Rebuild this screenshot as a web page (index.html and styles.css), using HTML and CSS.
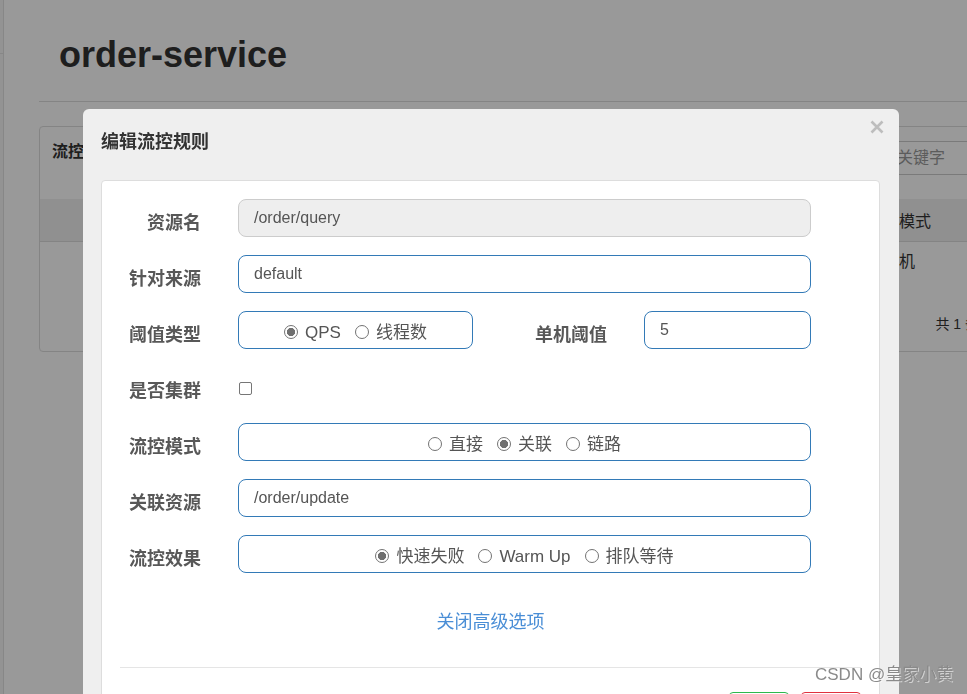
FILE: index.html
```html
<!DOCTYPE html>
<html lang="zh-CN">
<head>
<meta charset="utf-8">
<title>order-service</title>
<link rel="stylesheet" href="styles.css">
</head>
<body>
<div class="layout">
  <aside class="side"><div class="side-top"></div></aside>
  <main class="main">
    <div class="title-bar"><h1 class="app-title">order-service</h1></div>
    <section class="panel">
      <div class="panel-head">
        <span class="panel-title">流控规则</span>
        <div class="search"><span class="ph">请输入关键字</span></div>
      </div>
      <div class="trow thead"><span></span><span class="tc">阈值模式</span><span class="tc">操作</span></div>
      <div class="trow tbody-row"><span></span><span class="tc">单机</span><span class="tc"></span></div>
      <div class="pager">共 1 条记录</div>
    </section>
  </main>
</div>

<div class="overlay"></div>

<div class="modal">
  <div class="modal-head">
    <span class="modal-title">编辑流控规则</span>
    <svg class="close" width="14" height="14" viewBox="0 0 14 14"><path d="M1.5 1.5 L12.5 12.5 M12.5 1.5 L1.5 12.5" stroke="#bdbdbd" stroke-width="2.6" stroke-linecap="butt"/></svg>
  </div>
  <div class="card">
    <div class="form-row">
      <label class="lbl">资源名</label>
      <div class="ctl input disabled">/order/query</div>
    </div>
    <div class="form-row">
      <label class="lbl">针对来源</label>
      <div class="ctl input">default</div>
    </div>
    <div class="form-row">
      <label class="lbl">阈值类型</label>
      <div class="ctl radio-box narrow">
        <span class="radio checked"></span><span class="rtext">QPS</span>
        <span class="radio"></span><span class="rtext">线程数</span>
      </div>
      <label class="lbl lbl2">单机阈值</label>
      <div class="input">5</div>
    </div>
    <div class="form-row">
      <label class="lbl">是否集群</label>
      <div class="ctl"><span class="checkbox"></span></div>
    </div>
    <div class="form-row">
      <label class="lbl">流控模式</label>
      <div class="ctl radio-box">
        <span class="radio"></span><span class="rtext">直接</span>
        <span class="radio checked"></span><span class="rtext">关联</span>
        <span class="radio"></span><span class="rtext">链路</span>
      </div>
    </div>
    <div class="form-row">
      <label class="lbl">关联资源</label>
      <div class="ctl input">/order/update</div>
    </div>
    <div class="form-row">
      <label class="lbl">流控效果</label>
      <div class="ctl radio-box">
        <span class="radio checked"></span><span class="rtext">快速失败</span>
        <span class="radio"></span><span class="rtext">Warm Up</span>
        <span class="radio"></span><span class="rtext">排队等待</span>
      </div>
    </div>
    <div class="adv-link"><a class="link">关闭高级选项</a></div>
    <div class="card-footer">
      <button class="btn btn-ok">保存</button>
      <button class="btn btn-cancel">取消</button>
    </div>
  </div>
</div>

<div class="watermark">CSDN @皇家小黄</div>
</body>
</html>
```

FILE: styles.css
```css
* { box-sizing: border-box; }

html, body {
  margin: 0;
  padding: 0;
  width: 100%;
  height: 100%;
  overflow: hidden;
}

body {
  font-family: "Liberation Sans", "Noto Sans CJK SC", sans-serif;
  background: #ffffff;
  color: #333;
  position: relative;
}

/* ---------- background page ---------- */
.layout {
  display: flex;
  min-height: 100%;
}

.side {
  width: 4px;
  flex: none;
  background: #f6f6f6;
  border-right: 1px solid #e2e2e2;
}

.side-top {
  height: 54px;
  border-bottom: 1px solid #e2e2e2;
}

.main {
  flex: 1;
  min-width: 0;
  padding-left: 35px;
}

.title-bar {
  border-bottom: 1px solid #dddddd;
  padding: 35px 0 26px 20px;
}

.app-title {
  margin: 0;
  font-size: 36px;
  line-height: 40px;
  font-weight: bold;
  color: #333;
}

.panel {
  margin-top: 24px;
  margin-right: -108px;
  border: 1px solid #dddddd;
  border-radius: 4px;
}

.panel-head {
  display: flex;
  justify-content: space-between;
  align-items: flex-start;
  padding: 14px 38px 24px 12px;
}

.panel-title {
  font-size: 16px;
  line-height: 22px;
  font-weight: bold;
  color: #333;
}

.search {
  width: 200px;
  height: 34px;
  border: 1px solid #cccccc;
  border-radius: 4px;
  padding-left: 12px;
  font-size: 16px;
  line-height: 32px;
  color: #999;
}

.trow {
  display: grid;
  grid-template-columns: 1fr 110px 120px;
  height: 40px;
  align-items: center;
  font-size: 16px;
  color: #333;
}

.thead {
  height: 43px;
  background: #f0f0f0;
  border-bottom: 1px solid #dddddd;
}

.tbody-row {
  height: 36px;
}

.tc { text-align: center; }

.pager {
  display: flex;
  justify-content: flex-end;
  padding: 36px 67px 17px 0;
  font-size: 14px;
  line-height: 20px;
  color: #333;
}

/* ---------- overlay ---------- */
.overlay {
  position: fixed;
  inset: 0;
  background: rgba(0, 0, 0, 0.4);
  z-index: 10;
}

/* ---------- modal ---------- */
.modal {
  position: absolute;
  left: 83px;
  top: 109px;
  width: 816px;
  height: 640px;
  background: #efefef;
  border-radius: 6px;
  padding: 20px 19px 0 18px;
  z-index: 20;
}

.modal-head {
  display: flex;
  align-items: center;
  margin-bottom: 26px;
  padding-top: 1px;
}

.modal-title {
  font-size: 18px;
  line-height: 24px;
  font-weight: bold;
  color: #333;
}

.close {
  position: absolute;
  right: 15px;
  top: 11px;
}

.card {
  background: #fff;
  border: 1px solid #dddddd;
  border-radius: 4px;
  padding: 18px 68px 0 0;
  height: 100%;
}

.form-row {
  display: flex;
  align-items: center;
  height: 38px;
  margin-bottom: 18px;
}

.lbl {
  width: 100px;
  flex: none;
  text-align: right;
  padding-right: 1px;
  padding-top: 10px;
  font-size: 18px;
  line-height: 20px;
  font-weight: bold;
  color: #585858;
}

.lbl2 {
  width: 135px;
  margin-right: 36px;
}

.ctl { margin-left: 36px; }

.input {
  flex: 1;
  height: 38px;
  border: 1px solid #337ab7;
  border-radius: 8px;
  padding: 0 15px;
  font-size: 16px;
  line-height: 36px;
  color: #555;
}

.input.disabled {
  background: #eeeeee;
  border-color: #cccccc;
}

.radio-box {
  flex: 1;
  height: 38px;
  border: 1px solid #337ab7;
  border-radius: 8px;
  display: flex;
  justify-content: center;
  align-items: center;
  padding-top: 6px;
  font-size: 17px;
  color: #555;
}

.radio-box.narrow {
  flex: none;
  width: 235px;
}

.radio {
  width: 14px;
  height: 14px;
  border: 1.3px solid #737373;
  border-radius: 50%;
  background: #fff;
  margin-right: 7px;
  margin-left: 14px;
  margin-top: -2px;
  flex: none;
}

.radio:first-child { margin-left: 0; }

.radio.checked {
  background: radial-gradient(circle, #6f6f6f 0 3.8px, #ffffff 4.4px);
}

.rtext {
  line-height: 22px;
  white-space: nowrap;
}

.checkbox {
  display: block;
  width: 13px;
  height: 13px;
  margin-left: 1px;
  margin-top: 4px;
  border: 1px solid #767676;
  border-radius: 2px;
  background: #fff;
}

.adv-link {
  padding-top: 19px;
  text-align: center;
  padding-left: 68px;
  font-size: 18px;
  line-height: 24px;
}

.link {
  color: #4a8ed6;
  text-decoration: none;
}

.card-footer {
  margin: 33px -50px 0 18px;
  border-top: 1px solid #e5e5e5;
  padding-top: 24px;
  display: flex;
  justify-content: flex-end;
  gap: 12px;
}

.btn {
  width: 60px;
  height: 34px;
  border-radius: 4px;
  background: #fff;
  font-family: inherit;
  font-size: 14px;
}

.btn-ok {
  border: 1px solid #2db84d;
  color: #2db84d;
}

.btn-cancel {
  border: 1px solid #e0313f;
  color: #e0313f;
}

.watermark {
  position: absolute;
  left: 815px;
  top: 664px;
  font-size: 17px;
  line-height: 22px;
  color: #8a8a8a;
  text-shadow: 1px 1px 0 rgba(255, 255, 255, 0.55);
  white-space: nowrap;
  z-index: 30;
}
```
